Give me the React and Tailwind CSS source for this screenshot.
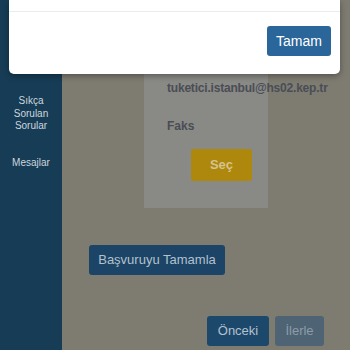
const App = () => {
  return (
    <div className="relative w-[350px] h-[350px] overflow-hidden flex font-['Liberation_Sans',Arial,sans-serif]">
      <aside className="w-[62px] shrink-0 bg-[#163d55] flex flex-col items-center pt-[95px] text-[10px] leading-[12.5px] text-[#cdd6de]">
        <p className="text-center">
          Sıkça
          <br />
          Sorulan
          <br />
          Sorular
        </p>
        <p className="mt-[24px]">Mesajlar</p>
      </aside>

      <main className="flex-1 bg-[#7e7c71] flex flex-col">
        <div className="ml-[82px] w-[124px] h-[208px] shrink-0 bg-[#898985] flex flex-col items-start pl-[23px] pt-[81px]">
          <p className="text-[12px] leading-[14px] font-bold tracking-[-0.2px] text-[#4a4d55] whitespace-nowrap">
            tuketici.istanbul@hs02.kep.tr
          </p>
          <p className="mt-[24px] text-[12px] leading-[14px] font-bold text-[#4a4d55]">
            Faks
          </p>
          <button className="mt-[16px] ml-[24px] w-[61px] h-[32px] rounded-[3px] bg-[#ae880c] text-[#d5c38c] text-[13px] font-bold">
            Seç
          </button>
        </div>

        <button className="ml-[27px] mt-[37px] w-[136px] h-[30px] self-start rounded-[3px] bg-[#1b4466] text-[#b4c1cd] text-[13px]">
          Başvuruyu Tamamla
        </button>

        <div className="mt-[41px] flex justify-end gap-[6px] pr-[26px]">
          <button className="w-[62px] h-[30px] rounded-[3px] bg-[#1c486c] text-[#b4c1cd] text-[13px]">
            Önceki
          </button>
          <button className="w-[49px] h-[30px] rounded-[3px] bg-[#4e6373] text-[#8d9caa] text-[13px]">
            İlerle
          </button>
        </div>
      </main>

      <div className="absolute top-0 left-[9px] w-[331px] h-[74px] bg-white rounded-b-[5px] shadow-[0_2px_6px_rgba(0,0,0,0.35)] flex flex-col">
        <div className="h-[12px] border-b border-[#ebebeb]" />
        <div className="flex justify-end pt-[14px] pr-[9px]">
          <button className="w-[64px] h-[30px] rounded-[3px] bg-[#2a669a] text-white text-[14px]">
            Tamam
          </button>
        </div>
      </div>
    </div>
  );
};

export default App;
